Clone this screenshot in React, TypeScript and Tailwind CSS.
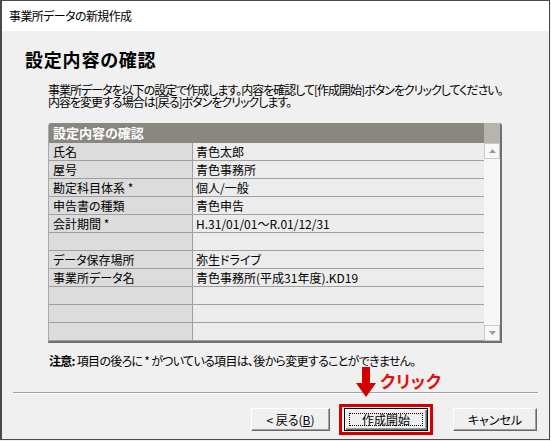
const rows: [string, string][] = [
  ["氏名", "青色太郎"],
  ["屋号", "青色事務所"],
  ["勘定科目体系 *", "個人/一般"],
  ["申告書の種類", "青色申告"],
  ["会計期間 *", "H.31/01/01～R.01/12/31"],
  ["", ""],
  ["データ保存場所", "弥生ドライブ"],
  ["事業所データ名", "青色事務所(平成31年度).KD19"],
  ["", ""],
  ["", ""],
  ["", ""],
];

const jp = "font-['Noto_Sans_CJK_JP',sans-serif] [font-feature-settings:'palt']";

function ClassicButton({ children, width }: { children: React.ReactNode; width: string }) {
  return (
    <button
      className={`${width} h-[23px] flex items-center justify-center bg-[#f0f0f0] border border-t-white border-l-white border-r-[#696969] border-b-[#696969] shadow-[inset_-1px_-1px_#a0a0a0] text-[12px] text-black`}
    >
      {children}
    </button>
  );
}

function ScrollArrow({ up }: { up: boolean }) {
  return (
    <div className="h-[16px] w-[16px] bg-[#f7f7f7] border border-[#c8c8c8] flex items-center justify-center">
      <svg width="7" height="4" viewBox="0 0 7 4">
        <path d={up ? "M0 4 L3.5 0 L7 4 Z" : "M0 0 L3.5 4 L7 0 Z"} fill="#9a9a9a" />
      </svg>
    </div>
  );
}

export default function App() {
  return (
    <div className={`w-[551px] h-[441px] bg-[#f0f0f0] ${jp}`}>
      <div className="relative w-[550px] h-[440px] bg-[#f0f0f0] border border-[#4a4a4a] border-l-2 flex flex-col">
        {/* title bar */}
        <div className="h-[30px] bg-white flex items-center pl-[7px] text-[12px] tracking-[-0.6px] text-black">
          事業所データの新規作成
        </div>

        <div className="flex-1 flex flex-col">
          <h1 className="mt-[19px] ml-[23px] text-[18px] leading-[18px] font-bold text-black tracking-[0.8px]">
            設定内容の確認
          </h1>

          <div className="mt-[16px] ml-[46px] text-[12px] leading-[12px] tracking-[-1px] text-black whitespace-nowrap">
            <p>事業所データを以下の設定で作成します。内容を確認して[作成開始]ボタンをクリックしてください。</p>
            <p>内容を変更する場合は[戻る]ボタンをクリックします。</p>
          </div>

          {/* settings table */}
          <div className="mt-[15px] ml-[46px] w-[454px] flex flex-col rounded-t-[3px] overflow-hidden border-l border-l-[#a8a8a8] border-r-2 border-r-[#707070] border-b-2 border-b-[#707070]">
            <div className="h-[20px] flex">
              <div className="flex-1 bg-[#8a8782] text-white font-bold text-[13px] leading-[20px] pl-[4px]">
                設定内容の確認
              </div>
              <div className="w-[16px] bg-[#b7b4af]" />
            </div>
            <div className="flex">
              <div className="flex-1 flex flex-col">
                {rows.map(([label, value], i) => (
                  <div key={i} className="h-[18px] flex border-b border-[#a0a0a0] text-[12px] leading-[17px] text-black">
                    <div className="w-[144px] bg-[#dcdcdc] border-r border-[#a0a0a0] pl-[4px]">{label}</div>
                    <div className="flex-1 bg-[#ececec] pl-[3px]">{value}</div>
                  </div>
                ))}
              </div>
              <div className="w-[16px] flex flex-col bg-[repeating-conic-gradient(#f2f2f2_0_25%,#fcfcfc_0_50%)] bg-[length:2px_2px]">
                <ScrollArrow up />
                <div className="flex-1" />
                <ScrollArrow up={false} />
              </div>
            </div>
          </div>

          <p className="mt-[11px] ml-[47px] text-[12px] leading-[14px] tracking-[-0.7px] text-black whitespace-nowrap">
            <span className="font-bold">注意:</span> 項目の後ろに * がついている項目は、後から変更することができません。
          </p>

          {/* separator */}
          <div className="mt-[24px] ml-[11px] mr-[11px] h-[2px] border-t border-[#a0a0a0] border-b border-b-white" />

          {/* buttons */}
          <div className="mt-[10px] flex items-center justify-end pr-[12px]">
            <ClassicButton width="w-[79px]">&lt; 戻る(<span className="underline">B</span>)</ClassicButton>
            <div className="ml-[9px] border-[3px] border-[#d40000] p-[2px] py-[1px]">
              <button className="w-[84px] h-[23px] relative flex items-center justify-center bg-[#f0f0f0] border border-black shadow-[inset_1px_1px_white,inset_-1px_-1px_#696969,inset_-2px_-2px_#a0a0a0] text-[12px] text-black">
                <span className="absolute inset-[4px] border border-dotted border-black" />
                <span className="relative">作成開始</span>
              </button>
            </div>
            <div className="ml-[20px]">
              <ClassicButton width="w-[84px]">キャンセル</ClassicButton>
            </div>
          </div>
        </div>

        {/* click annotation */}
        <div className="absolute left-[353px] top-[366px] flex items-start">
          <svg width="22" height="31" viewBox="0 0 22 31">
            <path d="M7 0 H15 V16 H21 L11 30 L1 16 H7 Z" fill="#d40000" />
          </svg>
          <span className="ml-[3px] mt-[5px] text-[17px] leading-[17px] font-bold text-[#e01010] tracking-[0.5px]">
            クリック
          </span>
        </div>
      </div>
    </div>
  );
}
